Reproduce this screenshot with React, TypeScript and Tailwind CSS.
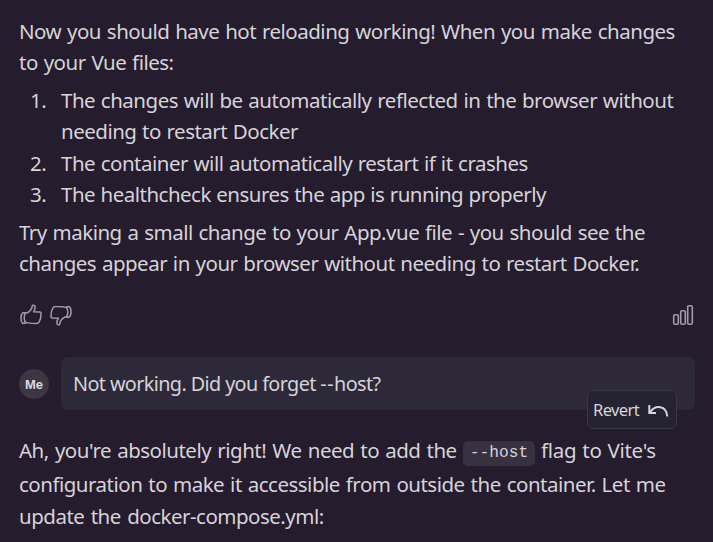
import React from "react";

function Line({ children, className = "" }: { children: React.ReactNode; className?: string }) {
  return <span className={`block whitespace-nowrap ${className}`}>{children}</span>;
}

function Thumb({ className = "" }: { className?: string }) {
  return (
    <svg className={className} width="22" height="22" viewBox="0 0 22 22" fill="none" stroke="currentColor" strokeWidth="1.5" strokeLinejoin="round" strokeLinecap="round">
      <path d="M5.2 9.2 C8.4 8.9 10.7 6.6 12 3.6 L12.2 2 C12.5 .9 14.7 1.1 15.1 2.5 C15.5 4.2 14.5 6.4 13.6 7.8 L19.5 8 C20.8 8.2 21.2 9 21 10.2 C21 13.2 20.3 16.2 19 18.2 C18.3 19.4 17.3 19.6 15.5 19.5 C11.8 19.5 8.5 19.4 5.7 18.4" />
      <path d="M5.4 8.9 L3.2 8.6 C.3 10.4 .2 17 2.7 19.6 L5.7 19.1 C4 16.1 3.9 11.9 5.4 8.9 Z" />
    </svg>
  );
}

function Bars() {
  return (
    <svg width="22" height="22" viewBox="0 0 22 22" fill="none" stroke="currentColor" strokeWidth="1.6">
      <rect x="1.7" y="10.7" width="4.6" height="9.6" rx="1.3" />
      <rect x="8.7" y="6.7" width="4.6" height="13.6" rx="1.3" />
      <rect x="15.7" y="1.7" width="4.6" height="18.6" rx="1.3" />
    </svg>
  );
}

const items = [
  { n: "1.", lines: [["The changes will be automatically reflected in the browser without", "[word-spacing:0.9px]"], ["needing to restart Docker", "[word-spacing:0.8px]"]] },
  { n: "2.", lines: [["The container will automatically restart if it crashes", "[word-spacing:0.7px]"]] },
  { n: "3.", lines: [["The healthcheck ensures the app is running properly", "[word-spacing:0.5px]"]] },
];

export default function App() {
  return (
    <main className="h-[542px] w-[713px] overflow-hidden bg-[#251c2d] pl-[19px] pr-[18px] pt-4 font-['Noto_Sans',sans-serif] text-[20.5px] leading-[31px] tracking-[-0.5px] text-[#d6d3d9]">
      <p>
        <Line className="[word-spacing:1px]">Now you should have hot reloading working! When you make changes</Line>
        <Line className="[word-spacing:1px]">to your Vue files:</Line>
      </p>
      <ol className="mt-[7px] flex flex-col gap-[0.5px]">
        {items.map((item) => (
          <li key={item.n} className="flex">
            <span className="w-[42px] pl-[11px]">{item.n}</span>
            <div>
              {item.lines.map(([text, cls]) => (
                <Line key={text} className={cls}>{text}</Line>
              ))}
            </div>
          </li>
        ))}
      </ol>
      <p className="mt-[7px]">
        <Line className="[word-spacing:0.9px]">Try making a small change to your App.vue file - you should see the</Line>
        <Line className="[word-spacing:0.9px]">changes appear in your browser without needing to restart Docker.</Line>
      </p>
      <div className="mt-[25px] flex h-[22px] items-center text-[#a29ca8]">
        <Thumb className="ml-px" />
        <Thumb className="ml-2 rotate-180" />
        <div className="ml-auto -mr-px w-[24px]"><Bars /></div>
      </div>
      <div className="relative mt-[31px] flex h-[53px] items-center">
        <div className="flex size-[30px] items-center justify-center rounded-full bg-[#3d3645] font-['Liberation_Sans',sans-serif] text-[13px] font-bold tracking-normal text-[#dedbe1]"><span className="pt-0.5">Me</span></div>
        <div className="ml-3 flex h-full flex-1 items-center rounded-[6px] bg-[#2d2938] pl-3">
          <Line className="text-[19.8px] tracking-[-0.6px]">Not working. Did you forget <span className="tracking-[0.5px]">--</span>host?</Line>
        </div>
        <button className="absolute right-[18px] top-[33px] flex h-[39px] w-[90px] items-center rounded-[6px] border border-[#3b3744] bg-[#252231] pl-[5px] text-[16.5px] tracking-[-0.6px]">
          <span>Revert</span>
          <svg className="ml-auto mr-[7px]" width="22" height="16" viewBox="0 0 22 16" fill="none" stroke="currentColor" strokeWidth="2">
            <path d="M2.3 3 V11 H9 M3 10.5 C8 2.5 19.5 3 20.3 14.5" />
          </svg>
        </button>
      </div>
      <p className="mt-[25px]">
        <Line className="flex h-[34px] items-start">
          <span className="w-[444px] [word-spacing:1.3px]">Ah, you're absolutely right! We need to add the</span>
          <code className="mt-[6px] flex h-[25px] w-[72px] items-center justify-center rounded-[5px] bg-[#38313f] font-['Liberation_Mono',monospace] text-[16.2px] tracking-normal">--host</code>
          <span className="ml-[6px] tracking-[-0.3px] [word-spacing:1px]">flag to Vite's</span>
        </Line>
        <Line className="[word-spacing:1.1px]">configuration to make it accessible from outside the container. Let me</Line>
        <Line className="pt-px [word-spacing:1.5px]">update the docker-compose.yml:</Line>
      </p>
    </main>
  );
}
